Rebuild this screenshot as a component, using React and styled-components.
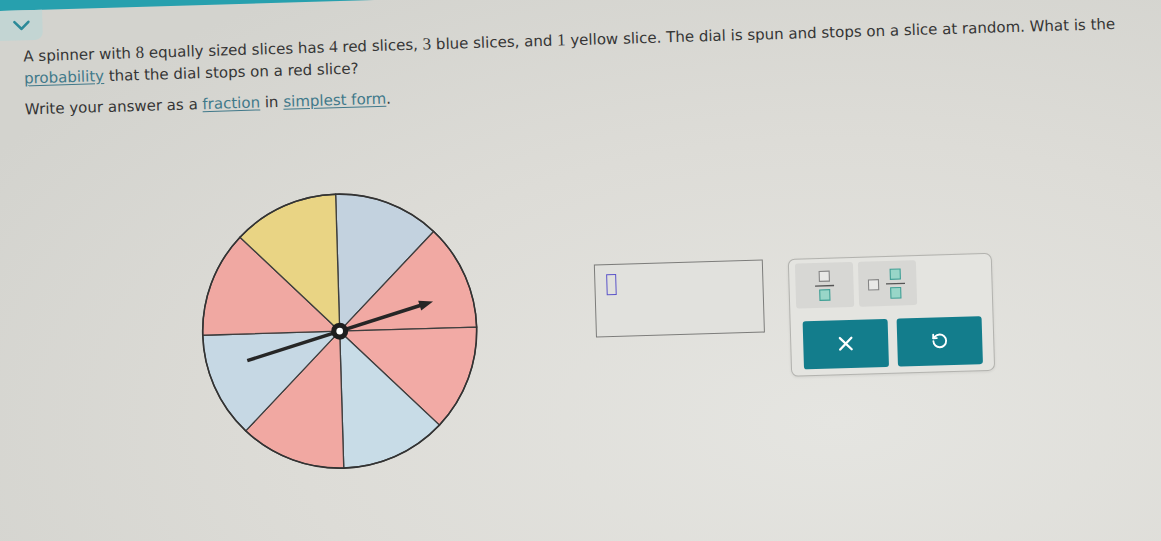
import React from 'react';
import styled, { createGlobalStyle } from 'styled-components';
import { ChevronDown, X, RotateCcw } from 'lucide-react';

const GlobalStyle = createGlobalStyle`
    html, body {
        margin: 0;
        width: 1161px;
        height: 541px;
        overflow: hidden;
        background: radial-gradient(ellipse 85% 95% at 72% 78%, #e5e5e1 0%, #dddcd7 55%, #d3d3ce 100%);
        font-family: "DejaVu Sans", Verdana, sans-serif;
    }
`;

const Viewport = styled.div`
    width: 1161px;
    height: 541px;
    overflow: hidden;
`;

// the whole screen sits a little tilted, so it is drawn larger and turned about its middle
const Screen = styled.div`
    width: 1221px;
    height: 601px;
    margin: -30px 0 0 -30px;
    transform: rotate(-1.7deg);
    transform-origin: 50% 50%;
    display: flex;
    flex-direction: column;
`;

const TopBar = styled.div`
    height: 24px;
    background: #27a0ae;
`;

const Header = styled.div`
    height: 30px;
    display: flex;
    justify-content: space-between;
    align-items: flex-start;
`;

const Tab = styled.div`
    width: 80px;
    height: 30px;
    background: #c3d5d3;
    border-bottom-right-radius: 8px;
    display: flex;
    align-items: center;
    justify-content: flex-end;
    padding-right: 7px;
    box-sizing: border-box;
    color: #2b8a98;
`;

const HeaderButton = styled.div`
    width: 50px;
    height: 20px;
    margin-right: -5px;
    border: 1.5px solid #a5a5a1;
    border-top: none;
    border-radius: 0 0 9px 9px;
`;

const Content = styled.div`
    padding: 5px 0 0 60px;
    color: #353535;
`;

const Text = styled.p`
    margin: ${(p) => p.$gap || 0} 0 0;
    font-size: 15px;
    line-height: 21.5px;
    white-space: nowrap;
`;

const Num = styled.span`
    font-family: "Liberation Serif", "Times New Roman", serif;
    font-size: 17px;
`;

const Term = styled.span`
    color: #41798a;
    text-decoration: underline;
    text-underline-offset: 2px;
`;

const Stage = styled.div`
    display: flex;
    align-items: center;
    margin: 80px 0 0 168px;
`;

const Answer = styled.div`
    display: flex;
    align-items: flex-start;
    gap: 25px;
    margin-left: 116px;
`;

const Field = styled.div`
    width: 169px;
    height: 73px;
    box-sizing: border-box;
    border: 1.5px solid #7c7c7a;
    background: #e1e1dd;
    padding: 9px 11px;
`;

const Caret = styled.div`
    width: 10px;
    height: 21px;
    box-sizing: border-box;
    border: 1.5px solid #5b54c9;
`;

const Keypad = styled.div`
    width: 204px;
    box-sizing: border-box;
    border: 1.5px solid #b3b3af;
    border-radius: 7px;
    background: #e4e4e0;
    box-shadow: 0 1px 3px rgba(0, 0, 0, 0.08);
    padding: 4px 10.5px 6.5px 5.5px;
`;

const TemplateRow = styled.div`
    display: flex;
    gap: 5px;
`;

const TemplateButton = styled.div`
    width: 58px;
    height: 45px;
    border-radius: 3px;
    background: #d7d7d4;
    display: flex;
    align-items: center;
    justify-content: center;
`;

const ActionRow = styled.div`
    display: grid;
    grid-template-columns: 85px 85px;
    gap: 9px;
    margin: 12.5px 0 0 6px;
`;

const ActionButton = styled.div`
    height: 48px;
    border-radius: 3px;
    background: #137d8c;
    color: white;
    display: flex;
    align-items: center;
    justify-content: center;
`;

const SLICE_COLORS = ['#c3d2df', '#f1a9a3', '#f2aaa5', '#c8dce7', '#f1a8a2', '#c6d8e4', '#f0a8a2', '#e9d484'];
const R = 137;

const point = (deg) => {
    const a = (deg * Math.PI) / 180;
    return [R * Math.sin(a), -R * Math.cos(a)];
};

const Spinner = () => (
    <svg width="280" height="280" viewBox="-140 -140 280 280">
        {SLICE_COLORS.map((fill, i) => {
            const [x1, y1] = point(i * 45);
            const [x2, y2] = point(i * 45 + 45);
            return (
                <path
                    key={i}
                    d={`M0 0 L${x1} ${y1} A${R} ${R} 0 0 1 ${x2} ${y2} Z`}
                    fill={fill}
                    stroke="#3e3e3e"
                    strokeWidth="1.3"
                />
            );
        })}
        <circle r={R} fill="none" stroke="#333" strokeWidth="1.6" />
        <g transform="rotate(-16)">
            <line x1="-97" y1="0" x2="86" y2="0" stroke="#262626" strokeWidth="3.5" />
            <polygon points="98,0 84,-5 84,5" fill="#262626" />
        </g>
        <circle r="8.5" fill="#1e1e1e" />
        <circle r="3.3" fill="#fff" />
    </svg>
);

// template glyphs: an empty box for the part still to fill, teal for the marked part
const FractionIcon = ({ mixed }) => (
    <svg width={mixed ? 40 : 22} height="34" viewBox={`0 0 ${mixed ? 40 : 22} 34`}>
        {mixed && <rect x="1" y="12.5" width="10" height="10" fill="#e9e9e7" stroke="#858585" strokeWidth="1.1" />}
        <g transform={mixed ? 'translate(17 0)' : ''}>
            <rect
                x="6"
                y="2.5"
                width="10"
                height="10"
                fill={mixed ? '#98d6c8' : '#e9e9e7'}
                stroke={mixed ? '#3f9f95' : '#858585'}
                strokeWidth="1.1"
            />
            <line x1="1.5" y1="17" x2="20.5" y2="17" stroke="#555" strokeWidth="1.3" />
            <rect x="6" y="21" width="10" height="10.5" fill="#98d6c8" stroke="#3f9f95" strokeWidth="1.1" />
        </g>
    </svg>
);

const App = () => (
    <Viewport>
        <GlobalStyle />
        <Screen>
            <TopBar />
            <Header>
                <Tab>
                    <ChevronDown size={28} strokeWidth={2.2} />
                </Tab>
                <HeaderButton />
            </Header>
            <Content>
                <Text>
                    A spinner with <Num>8</Num> equally sized slices has <Num>4</Num> red slices, <Num>3</Num> blue
                    slices, and <Num>1</Num> yellow slice. The dial is spun and stops on a slice at random. What is the
                    <br />
                    <Term>probability</Term> that the dial stops on a red slice?
                </Text>
                <Text $gap="9.5px">
                    Write your answer as a <Term>fraction</Term> in <Term>simplest form</Term>.
                </Text>
                <Stage>
                    <Spinner />
                    <Answer>
                        <Field>
                            <Caret />
                        </Field>
                        <Keypad>
                            <TemplateRow>
                                <TemplateButton>
                                    <FractionIcon />
                                </TemplateButton>
                                <TemplateButton>
                                    <FractionIcon mixed />
                                </TemplateButton>
                            </TemplateRow>
                            <ActionRow>
                                <ActionButton>
                                    <X size={23} strokeWidth={2.4} />
                                </ActionButton>
                                <ActionButton>
                                    <RotateCcw size={17} strokeWidth={2.6} />
                                </ActionButton>
                            </ActionRow>
                        </Keypad>
                    </Answer>
                </Stage>
            </Content>
        </Screen>
    </Viewport>
);

export default App;
